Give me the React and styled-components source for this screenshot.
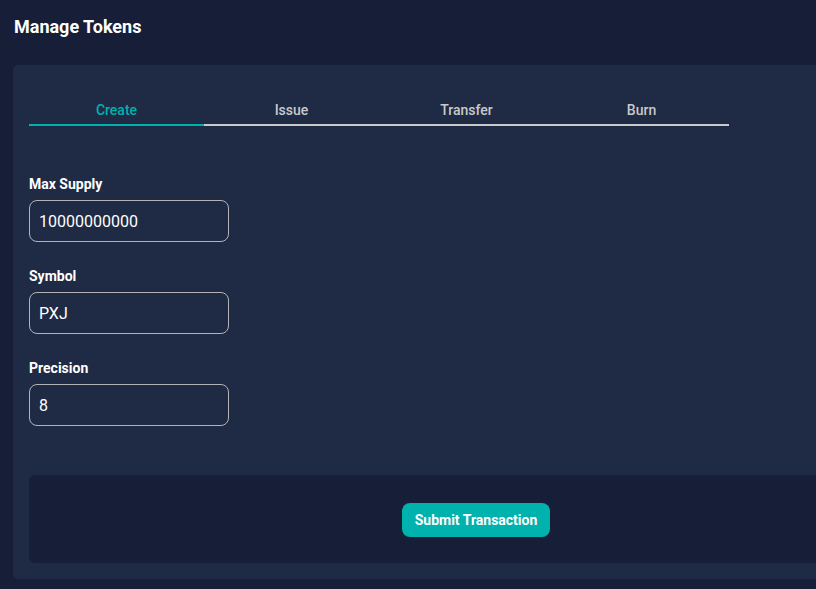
import React, { useState } from 'react'
import styled, { createGlobalStyle } from 'styled-components'

// STYLES
const Global = createGlobalStyle`
    html, body {
        margin: 0;
        padding: 0;
        background: #161f37;
        overflow: hidden;
        font-family: Roboto, "Liberation Sans", sans-serif;
    }
`;

const Page = styled.div`
    padding: 16px 0 0 13px;
    min-height: 589px;
    box-sizing: border-box;
`;

const Title = styled.h2`
    margin: 0 0 27px 1px;
    font-size: 18px;
    line-height: 22px;
    font-weight: 700;
    color: #fff;
`;

const Card = styled.div`
    width: 926px;
    box-sizing: border-box;
    background: #1f2a45;
    border-radius: 5px;
    padding: 25px 16px 16px;
`;

const Tabs = styled.div`
    display: flex;
    width: 700px;
`;

const Tab = styled.button`
    flex: 1;
    background: none;
    border: none;
    border-bottom: 2px solid ${p => (p.$active ? '#00b2ad' : '#c9c9c9')};
    padding: 12px 0 6px;
    font-family: inherit;
    font-size: 14px;
    line-height: 16px;
    font-weight: 500;
    color: ${p => (p.$active ? '#00b2ad' : '#c9c9c9')};
    cursor: pointer;
`;

const Form = styled.div`
    display: flex;
    flex-direction: column;
    padding-top: 50px;
    gap: 26px;
`;

const Field = styled.div`
    display: flex;
    flex-direction: column;
    gap: 8px;
`;

const Label = styled.label`
    font-size: 14px;
    line-height: 16px;
    font-weight: 700;
    color: #fff;
`;

const Input = styled.input`
    width: 200px;
    height: 42px;
    box-sizing: border-box;
    background: transparent;
    border: 1px solid #b4b4b8;
    border-radius: 8px;
    padding: 0 9px;
    font-family: inherit;
    font-size: 16px;
    color: #fff;
    outline: none;
`;

const Footer = styled.div`
    margin-top: 49px;
    background: #161f37;
    border-radius: 6px;
    padding: 28px 0 26px;
    display: flex;
    justify-content: center;
`;

const Submit = styled.button`
    height: 34px;
    padding: 0 13px;
    background: #00b2ad;
    border: none;
    border-radius: 8px;
    font-family: inherit;
    font-size: 14px;
    font-weight: 700;
    color: #fff;
    cursor: pointer;
`;

const tabs = ['Create', 'Issue', 'Transfer', 'Burn'];

const fields = [
    { label: 'Max Supply', value: '10000000000' },
    { label: 'Symbol', value: 'PXJ' },
    { label: 'Precision', value: '8' },
];

// MARKUP
const App = () => {
    const [active, setActive] = useState('Create');
    return (
        <Page>
            <Global />
            <Title>Manage Tokens</Title>
            <Card>
                <Tabs>
                    {tabs.map(t => (
                        <Tab key={t} $active={t === active} onClick={() => setActive(t)}>{t}</Tab>
                    ))}
                </Tabs>
                <Form>
                    {fields.map(f => (
                        <Field key={f.label}>
                            <Label>{f.label}</Label>
                            <Input defaultValue={f.value} />
                        </Field>
                    ))}
                </Form>
                <Footer>
                    <Submit>Submit Transaction</Submit>
                </Footer>
            </Card>
        </Page>
    )
}

export default App
